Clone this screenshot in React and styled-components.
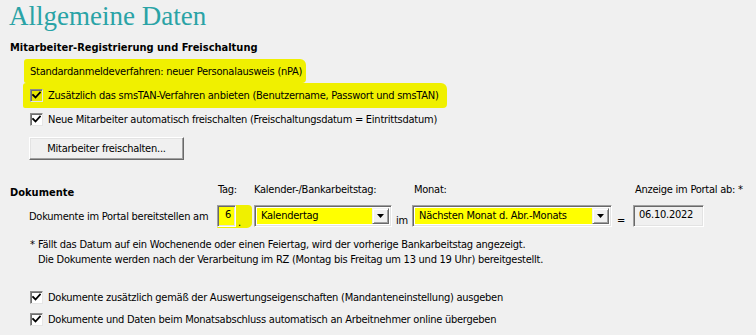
import React from 'react';
import styled, { createGlobalStyle } from 'styled-components';

const Global = createGlobalStyle`
  html, body { margin: 0; padding: 0; background: #f0f0f0; }
  body {
    font-family: "DejaVu Sans Condensed", "DejaVu Sans", sans-serif;
    font-size: 11px;
    letter-spacing: -0.25px;
    color: #000;
  }
`;

const HL_PAGE = '#f0f000';
const HL_WHITE = '#ffff00';

const Page = styled.div`
  width: 756px;
  height: 335px;
  overflow: hidden;
  background: #f0f0f0;
  white-space: nowrap;
`;

const Title = styled.h1`
  margin: 0;
  padding: 1px 0 0 9px;
  height: 34px;
  box-sizing: border-box;
  font-family: "Liberation Serif", serif;
  font-weight: normal;
  font-size: 27px;
  letter-spacing: 0;
  line-height: 30px;
  color: #2aa3a6;
`;

const Section = styled.section`
  padding-left: 10px;
`;

const Heading = styled.div`
  font-weight: bold;
  letter-spacing: 0;
  height: 14px;
  line-height: 14px;
  margin-top: ${p => p.$mt || 0}px;
`;

const Mark = styled.div`
  display: flex;
  align-items: center;
  gap: 5px;
  box-sizing: border-box;
  width: ${p => p.$w}px;
  height: ${p => p.$h}px;
  margin-left: ${p => p.$ml}px;
  padding-left: ${p => p.$pl}px;
  background: ${HL_PAGE};
  border-radius: 3px 6px 4px 2px;
`;

const Row = styled.div`
  display: flex;
  align-items: center;
  gap: 5px;
  height: ${p => p.$h}px;
  margin-top: ${p => p.$mt || 0}px;
  padding-left: ${p => p.$pl || 0}px;
`;

const BoxWrap = styled.span`
  flex: none;
  width: 13px;
  height: 13px;
  box-sizing: border-box;
  border: 1px solid;
  border-color: #8c8c8c #e6e6e6 #e6e6e6 #8c8c8c;
  box-shadow: inset 1px 1px 0 #6e6e6e;
  background: ${p => (p.$hl ? '#e8e800' : '#fff')};
  display: flex;
  align-items: center;
  justify-content: center;
`;

const Checkbox = ({ hl }) => (
  <BoxWrap $hl={hl}>
    <svg width="9" height="9" viewBox="0 0 9 9">
      <path d="M1 4 L3.5 6.5 L8 1.5" fill="none" stroke="#000" strokeWidth="1.8" strokeLinecap="square" />
    </svg>
  </BoxWrap>
);

const Button = styled.button`
  display: block;
  margin: 6px 0 0 19px;
  width: 155px;
  height: 23px;
  box-sizing: border-box;
  background: #f0f0f0;
  font: inherit;
  letter-spacing: inherit;
  color: #000;
  border: 1px solid;
  border-color: #fff #696969 #696969 #fff;
  box-shadow: inset -1px -1px 0 #a0a0a0, inset 1px 1px 0 #e3e3e3;
  padding: 0 0 1px;
`;

const DocGrid = styled.div`
  display: grid;
  grid-template-columns: 207px 37px 158px 221px auto;
  grid-template-rows: 18px 22px;
  row-gap: 7px;
  margin-top: 20px;
  align-items: center;
`;

const DocHeading = styled(Heading)`
  align-self: end;
  margin-bottom: -2px;
`;

const Label = styled.div`
  padding-left: ${p => p.$pl || 0}px;
`;

const Cell = styled.div`
  display: flex;
  align-items: ${p => p.$align || 'center'};
  height: 22px;
`;

const TagMark = styled.div`
  display: flex;
  align-items: flex-end;
  width: 35px;
  height: 23px;
  background: ${HL_PAGE};
  border-radius: 1px 4px 5px 1px;
`;

const Sunken = styled.div`
  box-sizing: border-box;
  width: ${p => p.$w}px;
  height: 22px;
  border: 1px solid;
  border-color: #a0a0a0 #fff #fff #a0a0a0;
  box-shadow: inset 1px 1px 0 #696969, inset -1px -1px 0 #e3e3e3;
  background: ${p => p.$bg || '#fff'};
  display: flex;
  flex: none;
`;

const TagInput = styled(Sunken)`
  justify-content: flex-end;
  align-self: flex-start;
  padding: 2px 4px 0 0;
  background: ${HL_WHITE};
  line-height: 14px;
`;

const Dot = styled.span`
  margin-left: 2px;
  line-height: 10px;
`;

const ComboText = styled.div`
  flex: 1;
  padding: 1px 0 0 4px;
  line-height: 14px;
  overflow: hidden;
  background: ${p => (p.$hl ? HL_WHITE : 'transparent')};
  margin: 2px 0 2px 2px;
`;

const DropBtn = styled.div`
  flex: none;
  width: 17px;
  margin: 2px 2px 2px 0;
  box-sizing: border-box;
  background: #f0f0f0;
  border: 1px solid;
  border-color: #f0f0f0 #696969 #696969 #f0f0f0;
  box-shadow: inset 1px 1px 0 #fff, inset -1px -1px 0 #a0a0a0;
  display: flex;
  align-items: center;
  justify-content: center;
`;

const Combo = ({ w, hl, children }) => (
  <Sunken $w={w} $bg="#fff">
    <ComboText $hl={hl}>{children}</ComboText>
    <DropBtn>
      <svg width="7" height="4" viewBox="0 0 7 4">
        <path d="M0 0 H7 L3.5 4 Z" fill="#000" />
      </svg>
    </DropBtn>
  </Sunken>
);

const Small = styled.span`
  margin-left: ${p => p.$ml || 0}px;
  line-height: 12px;
`;

const DateBox = styled(Sunken)`
  padding: 2px 0 0 5px;
  line-height: 14px;
  background: #f0f0f0;
`;

const Footnote = styled.div`
  display: flex;
  margin: 10px 0 0 20px;
  line-height: 15px;
`;

const Star = styled.span`
  flex: none;
  width: 8px;
`;

export default function App() {
  return (
    <Page>
      <Global />
      <Title>Allgemeine Daten</Title>
      <Section>
        <Heading $mt={7}>Mitarbeiter-Registrierung und Freischaltung</Heading>
        <Mark $w={282} $h={24} $ml={14} $pl={6} style={{ marginTop: 4 }}>
          Standardanmeldeverfahren: neuer Personalausweis (nPA)
        </Mark>
        <Mark $w={424} $h={25} $ml={13} $pl={7}>
          <Checkbox hl />
          Zusätzlich das smsTAN-Verfahren anbieten (Benutzername, Passwort und smsTAN)
        </Mark>
        <Row $h={23} $pl={20}>
          <Checkbox />
          Neue Mitarbeiter automatisch freischalten (Freischaltungsdatum = Eintrittsdatum)
        </Row>
        <Button>Mitarbeiter freischalten...</Button>

        <DocGrid>
          <DocHeading>Dokumente</DocHeading>
          <Label $pl={1}>Tag:</Label>
          <Label>Kalender-/Bankarbeitstag:</Label>
          <Label $pl={2}>Monat:</Label>
          <Label $pl={2}>Anzeige im Portal ab: *</Label>

          <Label $pl={19}>Dokumente im Portal bereitstellen am</Label>
          <Cell $align="flex-start">
            <TagMark>
              <TagInput $w={19}>6</TagInput>
              <Dot>.</Dot>
            </TagMark>
          </Cell>
          <Cell $align="flex-end">
            <Combo w={138} hl>Kalendertag</Combo>
            <Small $ml={4}>im</Small>
          </Cell>
          <Cell $align="flex-end">
            <Combo w={200} hl>Nächsten Monat d. Abr.-Monats</Combo>
            <Small $ml={5}>=</Small>
          </Cell>
          <Cell>
            <DateBox $w={71}>06.10.2022</DateBox>
          </Cell>
        </DocGrid>

        <Footnote>
          <Star>*</Star>
          <div>
            Fällt das Datum auf ein Wochenende oder einen Feiertag, wird der vorherige Bankarbeitstag angezeigt.
            <br />
            Die Dokumente werden nach der Verarbeitung im RZ (Montag bis Freitag um 13 und 19 Uhr) bereitgestellt.
          </div>
        </Footnote>

        <Row $h={22} $pl={20} $mt={19}>
          <Checkbox />
          Dokumente zusätzlich gemäß der Auswertungseigenschaften (Mandanteneinstellung) ausgeben
        </Row>
        <Row $h={22} $pl={20}>
          <Checkbox />
          Dokumente und Daten beim Monatsabschluss automatisch an Arbeitnehmer online übergeben
        </Row>
      </Section>
    </Page>
  );
}
